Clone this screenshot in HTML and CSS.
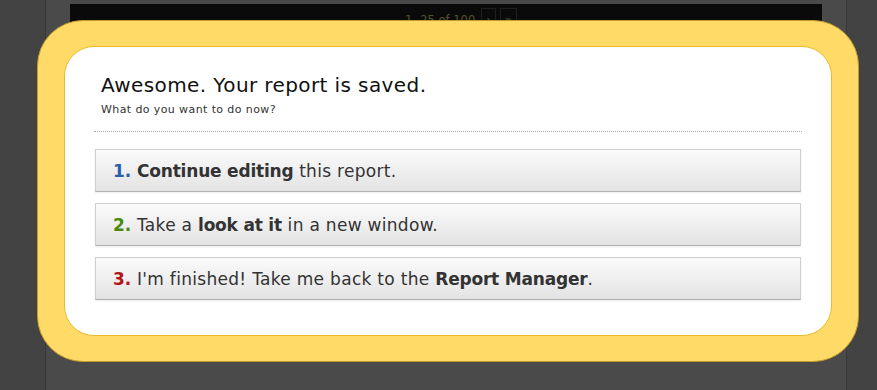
FILE: index.html
```html
<!DOCTYPE html>
<html lang="en">
<head>
    <meta charset="UTF-8">
    <meta name="viewport" content="width=device-width, initial-scale=1.0">
    <title>Report saved</title>
    <link rel="stylesheet" href="styles.css">
</head>
<body>
    <div class="page">
        <div class="toolbar">
            <span class="pager-count">1 -25 of 100</span>
            <span class="pager-btn">&rsaquo;</span>
            <span class="pager-btn">&raquo;</span>
        </div>
    </div>

    <div class="modal">
        <div class="modal-inner">
            <h1>Awesome. Your report is saved.</h1>
            <p class="subtitle">What do you want to do now?</p>
            <div class="choices">
                <a class="choice" href="#"><span class="num blue">1.</span> <b>Continue editing</b> this report.</a>
                <a class="choice" href="#"><span class="num green">2.</span> Take a <b>look at it</b> in a new window.</a>
                <a class="choice" href="#"><span class="num red">3.</span> I'm finished! Take me back to the <b>Report Manager</b>.</a>
            </div>
        </div>
    </div>
</body>
</html>
```

FILE: styles.css
```css
body {
    font-family: "DejaVu Sans", Verdana, sans-serif;
    background-color: #434343;
    margin: 0;
    height: 390px;
    overflow: hidden;
}
.page {
    margin-left: 45px;
    width: 802px;
    height: 390px;
    background-color: #4a4a4a;
    border-left: 1px solid #383838;
    border-right: 1px solid #383838;
    padding-top: 4px;
    box-sizing: border-box;
}
.toolbar {
    margin: 0 24px;
    height: 30px;
    background-color: #0a0a0a;
    display: flex;
    justify-content: center;
    align-items: flex-start;
    gap: 4px;
    padding: 4px 0 0 30px;
    box-sizing: border-box;
    color: #55512f;
    font-size: 11.5px;
}
.pager-count {
    margin-right: 2px;
    line-height: 20px;
    padding-top: 2px;
}
.pager-btn {
    border: 1px solid #1e1e1e;
    padding: 0 4px;
    line-height: 22px;
}
.modal {
    position: absolute;
    left: 37px;
    top: 20px;
    width: 822px;
    height: 342px;
    box-sizing: border-box;
    background-color: #ffda67;
    border: 1px solid #c29c2c;
    border-radius: 46px;
    padding: 25px 26px;
}
.modal-inner {
    height: 100%;
    box-sizing: border-box;
    background-color: white;
    border: 1px solid #e9bb2a;
    border-radius: 30px;
    padding: 26px 29px 0;
}
h1 {
    font-size: 20px;
    font-weight: normal;
    letter-spacing: 0.4px;
    color: #111;
    margin: 0;
    padding-left: 7px;
    line-height: 24px;
}
.subtitle {
    font-size: 11px;
    letter-spacing: 0.4px;
    color: #333;
    margin: 6px 0 0;
    padding: 0 0 15px 7px;
    border-bottom: 1px dotted #aaa;
}
.choices {
    display: flex;
    flex-direction: column;
    gap: 11px;
    margin: 17px 1px 0;
}
.choice {
    display: block;
    height: 43px;
    box-sizing: border-box;
    padding: 11px 17px 0;
    font-size: 17px;
    letter-spacing: 0.3px;
    color: #333;
    text-decoration: none;
    background: linear-gradient(#fbfbfb, #e3e3e3);
    border: 1px solid #cfcfcf;
    border-bottom-color: #b0b0b0;
    box-shadow: 0 1px 2px rgba(0, 0, 0, 0.08);
}
.choice b {
    color: #333;
    letter-spacing: -0.2px;
}
.num {
    font-weight: bold;
    letter-spacing: 0;
}
.blue {
    color: #2b5fa8;
}
.green {
    color: #4b8a0c;
}
.red {
    color: #b3141a;
}
```
